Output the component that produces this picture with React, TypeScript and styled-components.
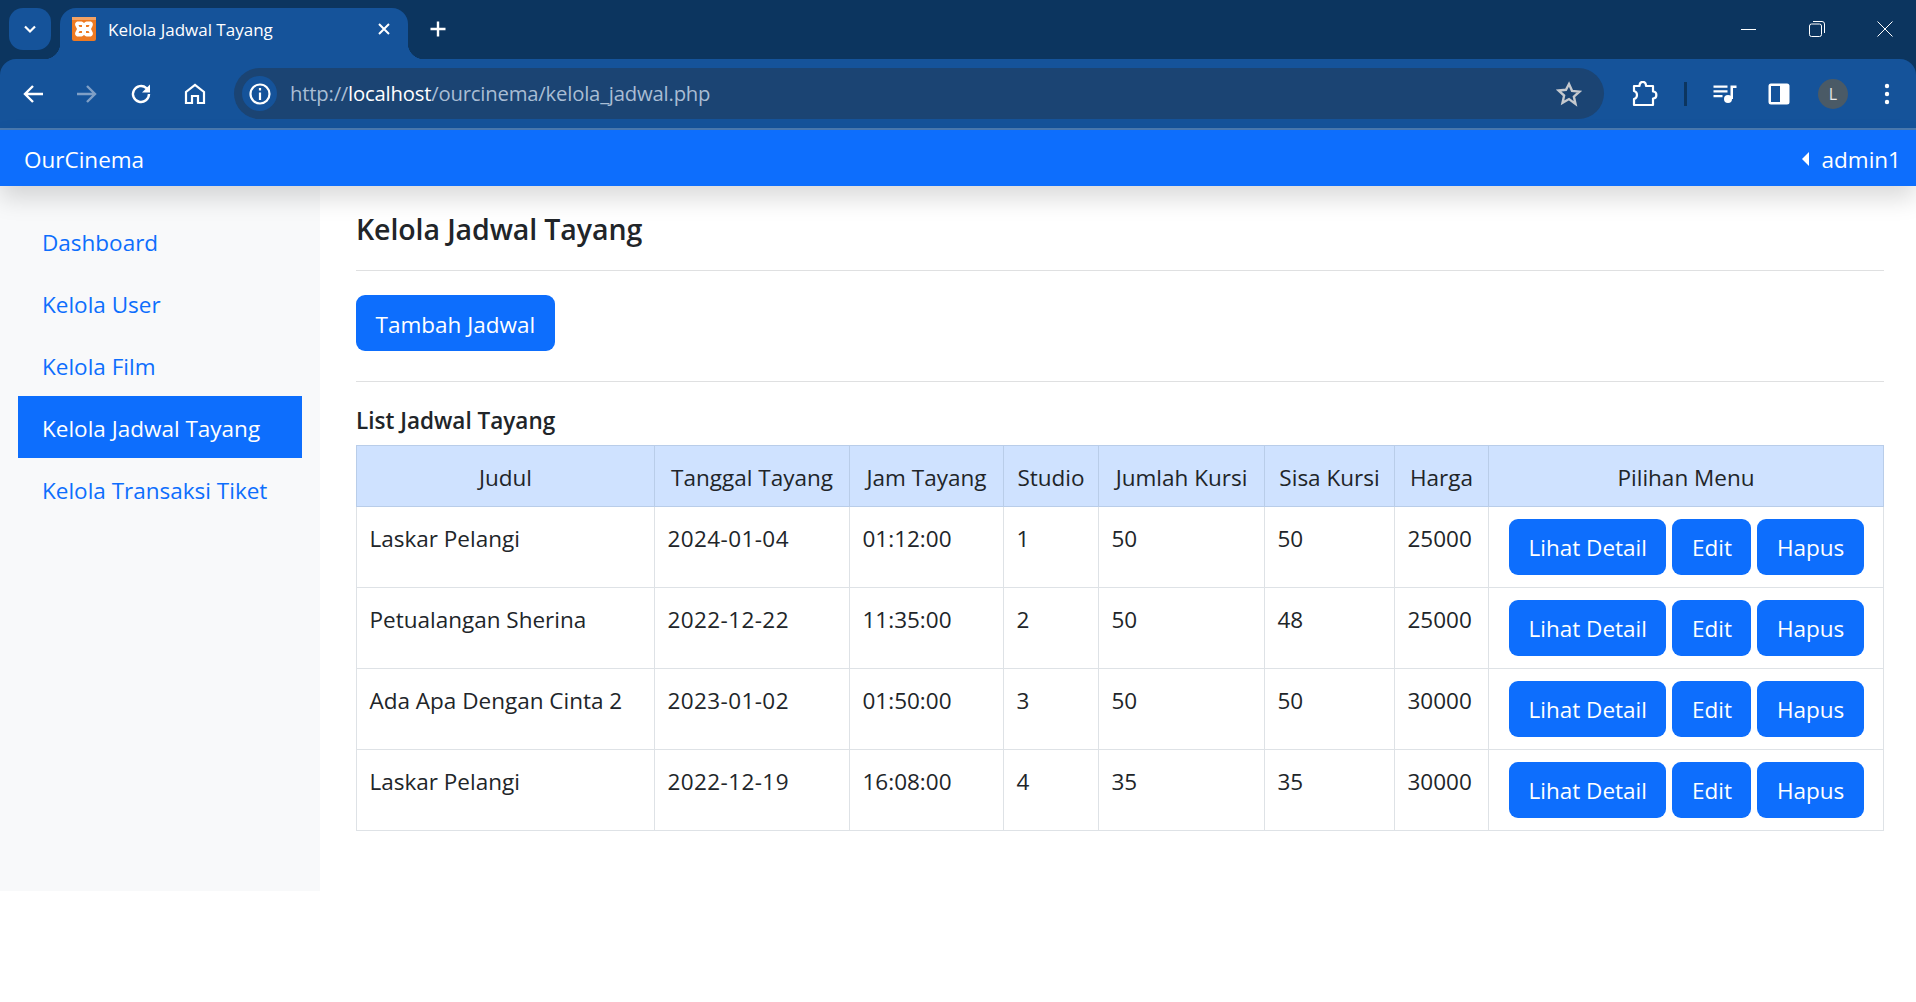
import styled, { createGlobalStyle } from "styled-components";

const GlobalStyle = createGlobalStyle`
  html, body {
    margin: 0;
    padding: 0;
    background: #fff;
    font-family: "Open Sans", "Liberation Sans", sans-serif;
    color: #212529;
  }
  * { box-sizing: border-box; }
`;

const schedules = [
  { title: "Laskar Pelangi", date: "2024-01-04", time: "01:12:00", studio: 1, seats: 50, left: 50, price: 25000 },
  { title: "Petualangan Sherina", date: "2022-12-22", time: "11:35:00", studio: 2, seats: 50, left: 48, price: 25000 },
  { title: "Ada Apa Dengan Cinta 2", date: "2023-01-02", time: "01:50:00", studio: 3, seats: 50, left: 50, price: 30000 },
  { title: "Laskar Pelangi", date: "2022-12-19", time: "16:08:00", studio: 4, seats: 35, left: 35, price: 30000 },
];

const menus = ["Dashboard", "Kelola User", "Kelola Film", "Kelola Jadwal Tayang", "Kelola Transaksi Tiket"];

const columns = [
  { label: "Judul", width: 298 },
  { label: "Tanggal Tayang", width: 195 },
  { label: "Jam Tayang", width: 154 },
  { label: "Studio", width: 95 },
  { label: "Jumlah Kursi", width: 166 },
  { label: "Sisa Kursi", width: 130 },
  { label: "Harga", width: 94 },
  { label: "Pilihan Menu", width: 395 },
];

export default function App() {
  return (
    <>
      <GlobalStyle />
      <BrowserFrame>
        <TabStrip>
          <TabSearch>
            <svg width="16" height="16" viewBox="0 0 16 16" fill="none" stroke="#fff" strokeWidth="2.2">
              <path d="M3 5.500l5 5 5-5" />
            </svg>
          </TabSearch>
          <Tab>
            <svg width="24" height="24" viewBox="0 0 24 24" fill="none">
              <rect width="24" height="24" rx="2" fill="#ee7a22" />
              <rect width="24" height="3" fill="#f3a264" />
              <path
                d="M6 4.500h3.500c1 0 1.500 1 2.500 1.500 1-.5 1.500-1.500 2.500-1.500H18c2.500 0 3.500 2.500 2.500 4.500L19 12l1.500 3c1 2 0 4.500-2.500 4.500h-3.500c-1 0-1.500-1-2.500-1.500-1 .5-1.500 1.500-2.500 1.500H6c-2.500 0-3.500-2.500-2.500-4.500L5 12 3.500 9C2.500 7 3.500 4.500 6 4.500z"
                fill="#fff"
              />
              <path d="M6.500 8h3.500v2H7.500zM14 8h3.500l-1 2H14zM7.500 14H10v2H6.500zM14 14h2.500l1 2H14z" fill="#ee7a22" />
            </svg>
            <TabTitle>Kelola Jadwal Tayang</TabTitle>
            <svg width="14" height="14" viewBox="0 0 14 14" stroke="#fff" strokeWidth="2">
              <path d="M2 2l10 10M12 2L2 12" />
            </svg>
          </Tab>
          <NewTab>
            <svg width="18" height="18" viewBox="0 0 18 18" stroke="#fff" strokeWidth="2.400">
              <path d="M9 1.500v15M1.500 9h15" />
            </svg>
          </NewTab>
          <WindowControls>
            <svg width="16" height="16" viewBox="0 0 16 16" stroke="#fff" strokeWidth="1">
              <path d="M0 8.500h15" />
            </svg>
            <svg width="16" height="16" viewBox="0 0 16 16" fill="none" stroke="#fff" strokeWidth="1">
              <rect x=".5" y="3" width="12" height="12.500" rx="2" />
              <path d="M4 .5h9a2.500 2.500 0 0 1 2.500 2.500v9" />
            </svg>
            <svg width="16" height="16" viewBox="0 0 16 16" stroke="#fff" strokeWidth="1">
              <path d="M.5.5l15 15M15.500.5l-15 15" />
            </svg>
          </WindowControls>
        </TabStrip>

        <Toolbar>
          <ToolButton>
            <svg width="24" height="24" viewBox="0 0 24 24" fill="none" stroke="#fff" strokeWidth="2.400">
              <path d="M22 12H4M12 4l-8 8 8 8" />
            </svg>
          </ToolButton>
          <ToolButton>
            <svg width="24" height="24" viewBox="0 0 24 24" fill="none" stroke="#7f9fc6" strokeWidth="2.400">
              <path d="M2 12h18M12 4l8 8-8 8" />
            </svg>
          </ToolButton>
          <ToolButton>
            <svg width="24" height="24" viewBox="0 0 24 24" fill="none" stroke="#fff" strokeWidth="2.400">
              <path d="M20 12a8 8 0 1 1-2.600-5.900L20 8.500" />
              <path d="M21 2.500v8h-8z" fill="#fff" stroke="none" />
            </svg>
          </ToolButton>
          <ToolButton>
            <svg width="24" height="24" viewBox="0 0 24 24" fill="none" stroke="#fff" strokeWidth="2.200">
              <path d="M3 21V10l9-7 9 7v11h-6v-7H9v7z" />
            </svg>
          </ToolButton>
          <Omnibox>
            <SiteInfo>
              <svg width="24" height="24" viewBox="0 0 24 24" fill="none" stroke="#fff" strokeWidth="2.200">
                <circle cx="12" cy="12" r="9.500" />
                <path d="M12 10.500V18M12 6v2.500" />
              </svg>
            </SiteInfo>
            <Url>
              http://<strong>localhost</strong>/ourcinema/kelola_jadwal.php
            </Url>
            <svg width="26" height="26" viewBox="0 0 24 24" fill="none" stroke="#c5c9ce" strokeWidth="2.200">
              <path d="M12 2.800l2.800 6.300 6.800.7-5.100 4.600 1.500 6.800L12 16.700l-6 3.500 1.500-6.800-5.100-4.600 6.800-.7z" />
            </svg>
          </Omnibox>
          <ExtensionButton>
            <svg width="26" height="26" viewBox="0 0 26 26" fill="none" stroke="#fff" strokeWidth="2.200" strokeLinejoin="round">
              <path d="M2 5h5.500c0-5.500 6.500-5.500 6.500 0H21v5.500c4.500 0 4.500 7 0 7V24H2v-6c4-1 4-7 0-8z" />
            </svg>
          </ExtensionButton>
          <Divider />
          <ToolButton>
            <svg width="24" height="24" viewBox="0 0 24 24" fill="#fff">
              <path d="M.5 3.500h14v2.200H.5zM.5 8.300h14v2.200H.5zM.5 13h9v2.200H.5z" />
              <circle cx="15" cy="17" r="4" />
              <path d="M17.500 17V3.500h6v2.500h-3.500V17z" />
            </svg>
          </ToolButton>
          <ToolButton>
            <svg width="24" height="24" viewBox="0 0 24 24">
              <rect x="1.500" y="1.500" width="21" height="21" rx="2.500" fill="#fff" />
              <rect x="4" y="4" width="9" height="16" fill="#15539a" />
            </svg>
          </ToolButton>
          <ToolButton>
            <Avatar>L</Avatar>
          </ToolButton>
          <ToolButton>
            <svg width="24" height="24" viewBox="0 0 24 24" fill="#fff">
              <circle cx="12" cy="4" r="2.200" />
              <circle cx="12" cy="12" r="2.200" />
              <circle cx="12" cy="20" r="2.200" />
            </svg>
          </ToolButton>
        </Toolbar>
      </BrowserFrame>

      <Navbar>
        <Brand>OurCinema</Brand>
        <UserMenu>
          <Caret />
          admin1
        </UserMenu>
      </Navbar>

      <Body>
        <Sidebar>
          {menus.map((menu) => (
            <NavItem key={menu} $active={menu === "Kelola Jadwal Tayang"}>
              {menu}
            </NavItem>
          ))}
        </Sidebar>
        <Main>
          <Title>Kelola Jadwal Tayang</Title>
          <Rule />
          <AddRow>
            <Button>Tambah Jadwal</Button>
          </AddRow>
          <Rule />
          <Subtitle>List Jadwal Tayang</Subtitle>
          <Table>
            <colgroup>
              {columns.map((col) => (
                <col key={col.label} style={{ width: col.width }} />
              ))}
            </colgroup>
            <thead>
              <tr>
                {columns.map((col) => (
                  <Th key={col.label}>{col.label}</Th>
                ))}
              </tr>
            </thead>
            <tbody>
              {schedules.map((row) => (
                <tr key={row.date}>
                  <Td>{row.title}</Td>
                  <NumberCell>{row.date}</NumberCell>
                  <Td>{row.time}</Td>
                  <Td>{row.studio}</Td>
                  <Td>{row.seats}</Td>
                  <Td>{row.left}</Td>
                  <Td>{row.price}</Td>
                  <ActionCell>
                    <Actions>
                      <Button>Lihat Detail</Button>
                      <Button>Edit</Button>
                      <Button>Hapus</Button>
                    </Actions>
                  </ActionCell>
                </tr>
              ))}
            </tbody>
          </Table>
        </Main>
      </Body>
    </>
  );
}

const BrowserFrame = styled.div`
  background: #0c355f;
`;

const TabStrip = styled.div`
  height: 59px;
  display: flex;
  align-items: flex-start;
  padding: 8px 23px 0 9px;
`;

const TabSearch = styled.div`
  width: 42px;
  height: 42px;
  border-radius: 14px;
  background: #15539a;
  display: flex;
  align-items: center;
  justify-content: center;
`;

const Tab = styled.div`
  position: relative;
  width: 348px;
  height: 51px;
  margin-left: 9px;
  padding: 0 17px 9px 12px;
  background: #15539a;
  border-radius: 16px 16px 0 0;
  display: flex;
  align-items: center;
  color: #fff;

  &::before,
  &::after {
    content: "";
    position: absolute;
    bottom: 0;
    width: 16px;
    height: 16px;
  }
  &::before {
    left: -16px;
    background: radial-gradient(circle at 0 0, transparent 16px, #15539a 16.5px);
  }
  &::after {
    right: -16px;
    background: radial-gradient(circle at 100% 0, transparent 16px, #15539a 16.5px);
  }
`;

const TabTitle = styled.span`
  flex: 1;
  margin-left: 12px;
  font-size: 17px;
  white-space: nowrap;
`;

const NewTab = styled.div`
  width: 42px;
  height: 42px;
  margin-left: 9px;
  display: flex;
  align-items: center;
  justify-content: center;
`;

const WindowControls = styled.div`
  margin-left: auto;
  width: 152px;
  height: 42px;
  display: flex;
  align-items: center;
  justify-content: space-between;
`;

const Toolbar = styled.div`
  height: 71px;
  padding: 0 2px 0 6px;
  background: #15539a;
  border-bottom: 2px solid #4a7ab0;
  border-radius: 16px 16px 0 0;
  display: flex;
  align-items: center;
`;

const ToolButton = styled.div`
  flex: none;
  width: 54px;
  height: 48px;
  display: flex;
  align-items: center;
  justify-content: center;
`;

const ExtensionButton = styled(ToolButton)`
  margin-left: 14px;
`;

const Omnibox = styled.div`
  flex: 1;
  height: 51px;
  margin-left: 12px;
  padding: 0 22px 0 8px;
  border-radius: 26px;
  background: #1b4473;
  display: flex;
  align-items: center;
`;

const SiteInfo = styled.div`
  width: 35px;
  height: 35px;
  border-radius: 50%;
  background: #15539a;
  display: flex;
  align-items: center;
  justify-content: center;
`;

const Url = styled.div`
  flex: 1;
  margin-left: 13px;
  font-size: 20.3px;
  line-height: 27px;
  letter-spacing: -0.2px;
  color: #a9bdd4;

  strong {
    font-weight: 400;
    color: #fff;
  }
`;

const Divider = styled.div`
  flex: none;
  width: 26px;
  height: 24px;
  display: flex;
  justify-content: center;

  &::before {
    content: "";
    width: 3px;
    background: #0c355f;
  }
`;

const Avatar = styled.div`
  width: 30px;
  height: 30px;
  border-radius: 50%;
  background: #4a5a66;
  color: #e6e6e6;
  font-size: 16px;
  display: flex;
  align-items: center;
  justify-content: center;
`;

const Navbar = styled.div`
  position: relative;
  z-index: 1;
  height: 56px;
  padding: 2px 15px 0 24px;
  background: #0d6efd;
  color: #fff;
  font-size: 22.5px;
  display: flex;
  align-items: center;
  justify-content: space-between;
  box-shadow: 0 12px 24px rgba(0, 0, 0, 0.15);
`;

const Brand = styled.div``;

const UserMenu = styled.div`
  display: flex;
  align-items: center;
`;

const Caret = styled.span`
  width: 0;
  height: 0;
  margin-right: 13px;
  border-top: 7px solid transparent;
  border-bottom: 7px solid transparent;
  border-right: 7px solid #fff;
`;

const Body = styled.div`
  display: flex;
  align-items: flex-start;
`;

const Sidebar = styled.nav`
  flex: none;
  width: 320px;
  height: 705px;
  padding: 24px 18px;
  background: #f8f9fa;
`;

const NavItem = styled.div<{ $active?: boolean }>`
  height: 62px;
  padding: 3px 24px 0;
  display: flex;
  align-items: center;
  font-size: 22.5px;
  white-space: nowrap;
  color: ${({ $active }) => ($active ? "#fff" : "#0d6efd")};
  background: ${({ $active }) => ($active ? "#0d6efd" : "transparent")};
`;

const Main = styled.main`
  flex: 1;
  padding: 25px 32px 0 36px;
`;

const Title = styled.h5`
  margin: 0 0 23px;
  font-size: 28.5px;
  line-height: 36px;
  font-weight: 600;
  letter-spacing: -0.1px;
`;

const Rule = styled.hr`
  margin: 0;
  border: 0;
  border-top: 1px solid #dfe0e1;
`;

const AddRow = styled.div`
  padding: 24px 0 30px;
  display: flex;
`;

const Button = styled.div`
  height: 56px;
  padding: 2px 19.5px 0;
  border-radius: 9px;
  background: #0d6efd;
  color: #fff;
  font-size: 22.5px;
  display: flex;
  align-items: center;
  white-space: nowrap;
`;

const Subtitle = styled.h6`
  margin: 23px 0 8px;
  font-size: 22.5px;
  line-height: 32px;
  font-weight: 600;
`;

const Table = styled.table`
  width: 1527px;
  table-layout: fixed;
  border-collapse: collapse;
  font-size: 22.5px;
`;

const Th = styled.th`
  height: 61px;
  padding: 2px 0 0;
  font-weight: 400;
  white-space: nowrap;
  background: #cfe2ff;
  border: 1px solid #b9cde9;
`;

const Td = styled.td`
  height: 81px;
  padding: 16px 12px 12px 12.5px;
  vertical-align: top;
  line-height: 32px;
  white-space: nowrap;
  border: 1px solid #dee2e6;
`;

const NumberCell = styled(Td)`
  letter-spacing: 0.4px;
`;

const ActionCell = styled(Td)`
  padding: 12px 12px 12px 20px;
`;

const Actions = styled.div`
  display: flex;
  gap: 6px;
`;
